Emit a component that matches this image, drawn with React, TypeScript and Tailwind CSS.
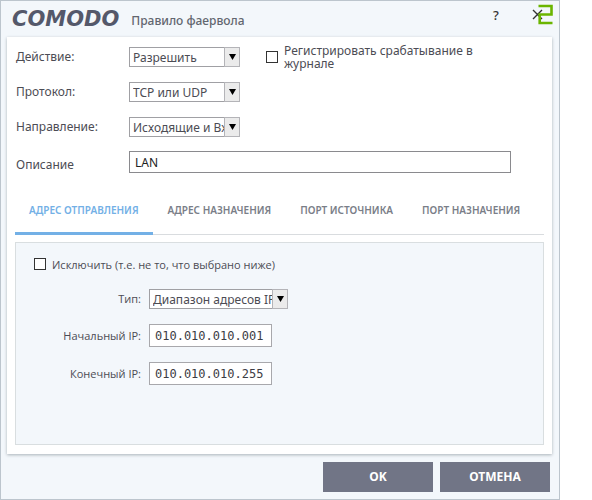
import { useState } from "react";
import type { ReactNode } from "react";

const tabs = [
	"АДРЕС ОТПРАВЛЕНИЯ",
	"АДРЕС НАЗНАЧЕНИЯ",
	"ПОРТ ИСТОЧНИКА",
	"ПОРТ НАЗНАЧЕНИЯ",
];

type SelectProps = {
	id: string;
	options: string[];
	className: string;
};

const Select = ({ id, options, className }: SelectProps) => (
	<div className={`relative h-5 ${className}`}>
		<select
			id={id}
			className="block h-5 w-full appearance-none overflow-hidden border border-[#a0a0a4] bg-white pt-px pr-[10px] pl-[3px] font-['Noto_Sans',sans-serif] text-[12px] leading-[17px] text-[#4c4c54]"
		>
			{options.map((option) => (
				<option key={option}>{option}</option>
			))}
		</select>
		<span className="pointer-events-none absolute inset-y-0 right-0 flex w-4 items-center justify-center border border-[#b4b4b8] bg-[#ebebeb]">
			<svg viewBox="0 0 7 6" className="h-[6px] w-[7px]" aria-hidden="true">
				<path d="M0 0h7L3.5 6z" fill="#000" />
			</svg>
		</span>
	</div>
);

type CheckboxProps = {
	children: ReactNode;
	className?: string;
};

const Checkbox = ({ children, className = "" }: CheckboxProps) => (
	<label className={`flex items-start gap-[6px] ${className}`}>
		<input
			type="checkbox"
			className="size-3 shrink-0 appearance-none border border-[#333] bg-white checked:bg-[#73b0e6]"
		/>
		<span>{children}</span>
	</label>
);

const Header = () => (
	<header className="flex h-9 items-center pr-[5px] pl-[11px]">
		<span className="font-['DejaVu_Sans',sans-serif] text-[21px] leading-6 font-bold text-[#54586a] italic">
			COMODO
		</span>
		<h1 className="ml-3 pt-1 text-[12px] font-medium text-[#62666f]">
			Правило фаервола
		</h1>
		<button
			type="button"
			aria-label="Справка"
			className="mr-7 ml-auto w-4 pb-2 text-[13px] font-medium text-[#333]"
		>
			?
		</button>
		<button
			type="button"
			aria-label="Закрыть"
			className="h-[26px] w-[22px] self-start"
		>
			<svg viewBox="0 0 22 26" className="h-[26px] w-[22px]">
				<path d="M1 9l9 9M10 9l-9 9" stroke="#333" strokeWidth="1.4" />
				<path
					d="M6.5 5h13v8.5H7.7V22H20.5"
					fill="none"
					stroke="#6bb500"
					strokeWidth="2.6"
				/>
			</svg>
		</button>
	</header>
);

const RuleFields = () => (
	<div className="grid grid-cols-[113px_minmax(0,1fr)] items-center gap-y-[15px] pr-[33px] pl-px">
		<label htmlFor="action">Действие:</label>
		<div className="flex h-5 items-start">
			<Select
				id="action"
				className="w-[111px] shrink-0"
				options={["Разрешить", "Блокировать", "Спросить"]}
			/>
			<Checkbox className="ml-[26px] w-[230px] pt-1 leading-[13px]">
				<span className="-mt-[7px] block">
					Регистрировать срабатывание в журнале
				</span>
			</Checkbox>
		</div>
		<label htmlFor="protocol">Протокол:</label>
		<Select
			id="protocol"
			className="w-[111px]"
			options={["TCP или UDP", "TCP", "UDP", "ICMP", "IP"]}
		/>
		<label htmlFor="direction">Направление:</label>
		<Select
			id="direction"
			className="w-[111px]"
			options={["Исходящие и Входящие", "Исходящие", "Входящие"]}
		/>
		<label htmlFor="description" className="pt-1">
			Описание
		</label>
		<input
			id="description"
			type="text"
			defaultValue="LAN"
			className="-mt-px h-[22px] w-full border border-[#8a8a8e] bg-white px-[5px] text-[12px] text-[#222]"
		/>
	</div>
);

const AddressForm = () => (
	<div className="h-[203px] border border-[#d9dee0] bg-[#f3f7fb] pt-[15px] pl-[18px] font-['Open_Sans',sans-serif] text-[11px] font-medium">
		<Checkbox className="leading-[14px]">
			Исключить (т.е. не то, что выбрано ниже)
		</Checkbox>
		<div className="mt-[17px] grid grid-cols-[107px_minmax(0,1fr)] items-center gap-x-2 gap-y-[15px]">
			<label htmlFor="type" className="text-right">
				Тип:
			</label>
			<Select
				id="type"
				className="w-[139px] font-normal"
				options={["Диапазон адресов IPv4", "Адрес IPv4", "Любой адрес"]}
			/>
			<label htmlFor="start-ip" className="text-right">
				Начальный IP:
			</label>
			<input
				id="start-ip"
				type="text"
				defaultValue="010.010.010.001"
				className="h-[23px] w-[123px] border border-[#a8a8ac] bg-white px-[5px] font-['DejaVu_Sans_Mono',monospace] text-[12px] font-normal text-[#3c3c44]"
			/>
			<label htmlFor="end-ip" className="text-right">
				Конечный IP:
			</label>
			<input
				id="end-ip"
				type="text"
				defaultValue="010.010.010.255"
				className="h-[23px] w-[123px] border border-[#a8a8ac] bg-white px-[5px] font-['DejaVu_Sans_Mono',monospace] text-[12px] font-normal text-[#3c3c44]"
			/>
		</div>
	</div>
);

export default function App() {
	const [active, setActive] = useState(0);

	return (
		<div className="min-h-screen bg-white pr-8 font-['Noto_Sans','Open_Sans',sans-serif] text-[12px] leading-4 text-[#4c4c54]">
			<div className="flex min-h-screen flex-col border border-[#bcc5cd] bg-[#f3f7fb] pb-[7px]">
				<Header />
				<main className="mr-[7px] ml-[6px] bg-white px-2 pt-[10px] pb-[9px] shadow-[0_1px_3px_#a9b2b9]">
					<RuleFields />
					<div
						role="tablist"
						className="mt-5 flex gap-px border-b border-[#d9dcdf] text-[10px] font-semibold"
					>
						{tabs.map((tab, index) => (
							<button
								key={tab}
								type="button"
								role="tab"
								aria-selected={index === active}
								onClick={() => setActive(index)}
								className={`-mb-px h-[42px] border-b-3 px-[14px] pt-px pb-[6px] whitespace-nowrap ${
									index === active
										? "border-[#73b0e6] text-[#73b0e6]"
										: "border-transparent text-[#7a7e88]"
								}`}
							>
								{tab}
							</button>
						))}
					</div>
					<div className="mt-[7px]">
						<AddressForm />
					</div>
				</main>
				<footer className="mt-auto flex justify-end gap-[7px] pr-[9px] text-[12px] font-bold text-white">
					<button type="button" className="h-[30px] w-[110px] bg-[#717586]">
						OK
					</button>
					<button type="button" className="h-[30px] w-[110px] bg-[#717586]">
						ОТМЕНА
					</button>
				</footer>
			</div>
		</div>
	);
}
